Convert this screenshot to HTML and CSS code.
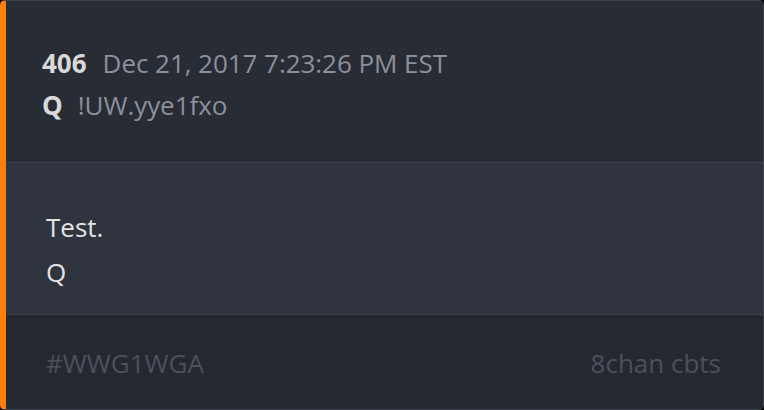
FILE: index.html
```html
<!DOCTYPE html>
<html>
<head>
<meta charset="utf-8">
<link rel="stylesheet" href="styles.css">
</head>
<body>
<div class="card">
  <div class="head">
    <div class="row"><span class="num">406</span><span class="meta">Dec 21, 2017 7:23:26 PM EST</span></div>
    <div class="row"><span class="num">Q</span><span class="meta trip">!UW.yye1fxo</span></div>
  </div>
  <div class="body">
    <p>Test.</p>
    <p>Q</p>
  </div>
  <div class="foot">
    <span>#WWG1WGA</span>
    <span>8chan cbts</span>
  </div>
</div>
</body>
</html>
```
FILE: styles.css
```css
html, body { margin: 0; background: #000; }
body { width: 764px; height: 410px; font-family: "Open Sans", "Noto Sans", sans-serif; }
.card {
  box-sizing: border-box;
  width: 764px; height: 410px;
  border: 1px solid #3c414b;
  border-left: 6px solid #ff7f0e;
  border-radius: 5px;
  overflow: hidden;
  display: flex; flex-direction: column;
  background: #252830;
}
.head {
  background: #282c35;
  padding: 41px 0 0 36px;
  height: 162px;
  box-sizing: border-box;
  border-bottom: 1px solid #3c414b;
}
.row { display: flex; align-items: baseline; font-size: 26px; line-height: 42px; }
.num { color: #d9d9d9; font-weight: 700; margin-right: 16px; }
.meta { color: #8b909c; letter-spacing: -0.05px; }
.trip { margin-left: -1px; }
.body {
  background: #2f343e;
  height: 152px;
  box-sizing: border-box;
  padding: 42px 0 0 40px;
  border-bottom: 1px solid #3c414b;
  color: #e3e3e3;
  font-size: 26px;
}
.body p { margin: 0; line-height: 45px; }
.foot {
  flex: 1;
  display: flex; justify-content: space-between; align-items: center;
  padding: 2px 42px 0 40px;
  color: #4b505b;
  font-size: 26px;
}
```
